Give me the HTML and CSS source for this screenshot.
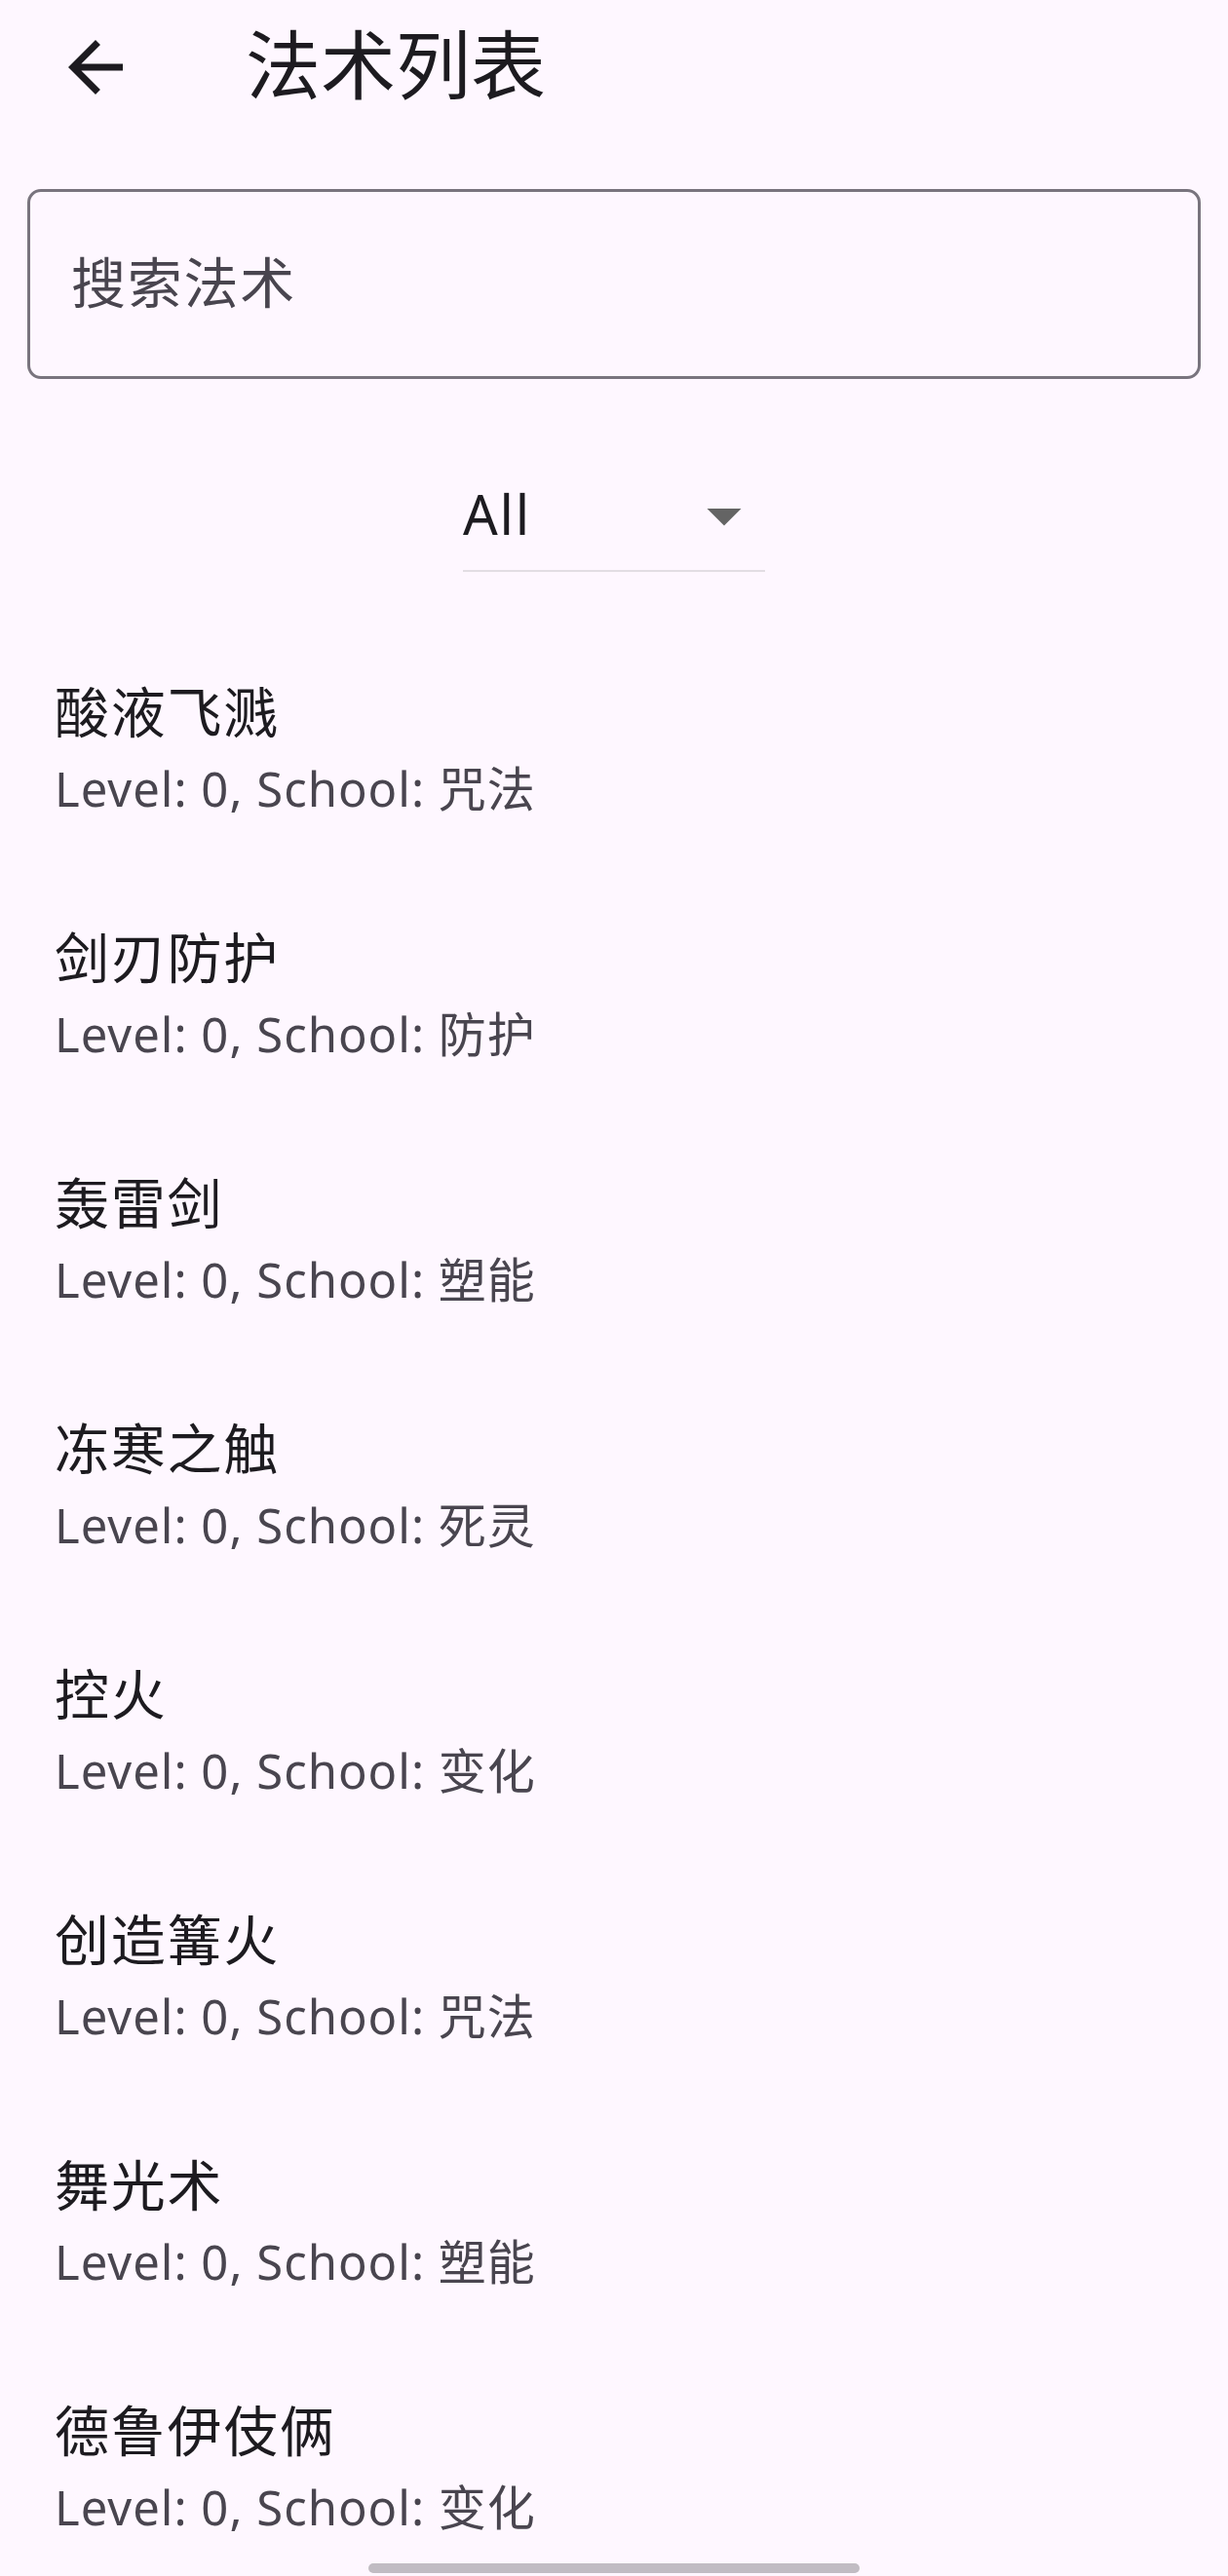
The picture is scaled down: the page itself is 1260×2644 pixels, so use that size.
FILE: index.html
```html
<!DOCTYPE html>
<html lang="zh-CN">
<head>
<meta charset="utf-8">
<title>法术列表</title>
<link rel="stylesheet" href="styles.css">
</head>
<body>
<div class="screen">
  <header class="appbar">
    <div class="leading">
      <svg class="icon" viewBox="0 0 24 24" width="84" height="84"><path d="M20 11H7.83l5.59-5.59L12 4l-8 8 8 8 1.41-1.41L7.83 13H20v-2z" fill="#1D1B20"/></svg>
    </div>
    <h1 class="title">法术列表</h1>
  </header>

  <section class="search-wrap">
    <div class="search"><span class="placeholder">搜索法术</span></div>
  </section>

  <section class="filter-wrap">
    <div class="dropdown">
      <span class="dropdown-value">All</span>
      <svg class="icon" viewBox="0 0 24 24" width="84" height="84"><path d="M7 10l5 5 5-5z" fill="#646464"/></svg>
    </div>
  </section>

  <ul class="list">
    <li class="item"><span class="item-title">酸液飞溅</span><span class="item-sub">Level: 0, School: 咒法</span></li>
    <li class="item"><span class="item-title">剑刃防护</span><span class="item-sub">Level: 0, School: 防护</span></li>
    <li class="item"><span class="item-title">轰雷剑</span><span class="item-sub">Level: 0, School: 塑能</span></li>
    <li class="item"><span class="item-title">冻寒之触</span><span class="item-sub">Level: 0, School: 死灵</span></li>
    <li class="item"><span class="item-title">控火</span><span class="item-sub">Level: 0, School: 变化</span></li>
    <li class="item"><span class="item-title">创造篝火</span><span class="item-sub">Level: 0, School: 咒法</span></li>
    <li class="item"><span class="item-title">舞光术</span><span class="item-sub">Level: 0, School: 塑能</span></li>
    <li class="item"><span class="item-title">德鲁伊伎俩</span><span class="item-sub">Level: 0, School: 变化</span></li>
  </ul>

  <div class="nav-handle"></div>
</div>
</body>
</html>
```

FILE: styles.css
```css
html, body {
  margin: 0;
  padding: 0;
  background: #FEF7FF;
  height: 2644px;
  overflow: hidden;
}

body {
  font-family: "Noto Sans", "Noto Sans CJK SC", sans-serif;
  color: #1D1B20;
}

.screen {
  position: relative;
  width: 1260px;
  height: 2644px;
  overflow: hidden;
}

.appbar {
  display: flex;
  align-items: center;
  height: 138px;
}

.leading {
  width: 196px;
  height: 138px;
  display: flex;
  align-items: center;
  justify-content: center;
  flex-shrink: 0;
}

.icon {
  display: block;
  flex-shrink: 0;
}

.title {
  margin: 0 0 6px 56px;
  font-size: 77px;
  font-weight: 400;
  line-height: 77px;
  color: #1D1B20;
}

.search-wrap {
  padding: 56px 28px 28px;
}

.search {
  box-sizing: border-box;
  height: 195px;
  border: 3px solid #79747E;
  border-radius: 14px;
  display: flex;
  align-items: center;
  padding-left: 42px;
  padding-bottom: 6px;
}

.placeholder {
  font-size: 56px;
  line-height: 84px;
  letter-spacing: 1.75px;
  color: #49454F;
}

.filter-wrap {
  display: flex;
  justify-content: center;
  padding-top: 56px;
}

.dropdown {
  box-sizing: border-box;
  width: 310px;
  height: 114px;
  display: flex;
  align-items: center;
  justify-content: space-between;
  border-bottom: 2px solid #E2DDE3;
}

.dropdown-value {
  font-size: 56px;
  line-height: 84px;
  letter-spacing: 1.75px;
  color: #1D1B20;
  margin-bottom: 4px;
}

.list {
  list-style: none;
  margin: 54px 0 0;
  padding: 0;
}

.item {
  box-sizing: border-box;
  height: 252px;
  padding: 0 56px 2.5px;
  display: flex;
  flex-direction: column;
  justify-content: center;
}

.item-title {
  font-size: 56px;
  line-height: 84px;
  letter-spacing: 1.75px;
  color: #1D1B20;
  margin-bottom: 2.5px;
}

.item-sub {
  font-size: 49px;
  line-height: 70px;
  letter-spacing: 1px;
  color: #49454F;
}

.nav-handle {
  position: absolute;
  left: 378px;
  bottom: 3px;
  width: 504px;
  height: 10px;
  border-radius: 5px;
  background: #C1BCC3;
}
```
